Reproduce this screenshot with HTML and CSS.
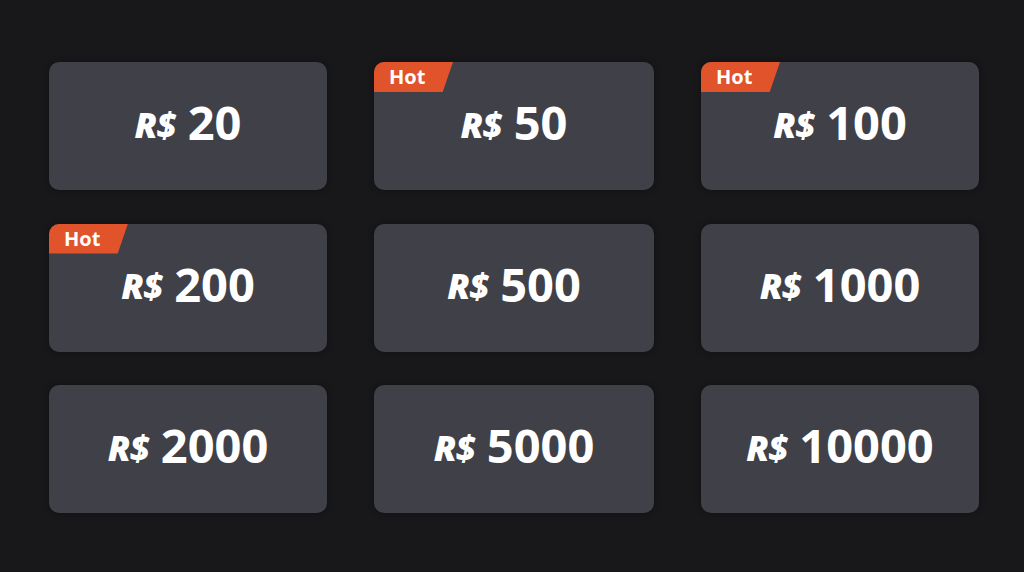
FILE: index.html
```html
<!DOCTYPE html>
<html lang="en">
<head>
    <meta charset="UTF-8">
    <title>Recarga</title>
    <link rel="stylesheet" href="styles.css">
</head>
<body>
    <div class="grid">
        <div class="card"><span class="cur">R$</span><span class="num">20</span></div>
        <div class="card"><span class="hot">Hot</span><span class="cur">R$</span><span class="num">50</span></div>
        <div class="card"><span class="hot">Hot</span><span class="cur">R$</span><span class="num">100</span></div>
        <div class="card"><span class="hot">Hot</span><span class="cur">R$</span><span class="num">200</span></div>
        <div class="card"><span class="cur">R$</span><span class="num">500</span></div>
        <div class="card"><span class="cur">R$</span><span class="num">1000</span></div>
        <div class="card"><span class="cur">R$</span><span class="num">2000</span></div>
        <div class="card"><span class="cur">R$</span><span class="num">5000</span></div>
        <div class="card"><span class="cur">R$</span><span class="num">10000</span></div>
    </div>
</body>
</html>
```

FILE: styles.css
```css
html, body {
  margin: 0;
  padding: 0;
}
body {
  background: #18181a;
  width: 1024px;
  height: 572px;
  font-family: "Open Sans", "Noto Sans", sans-serif;
}
.grid {
  display: grid;
  grid-template-columns: 278px 280px 278px;
  grid-template-rows: 128px 128px 128px;
  column-gap: 47px;
  row-gap: 33.5px;
  padding: 62px 0 0 49px;
}
.card {
  position: relative;
  background: #3f4048;
  border-radius: 10px;
  display: flex;
  align-items: center;
  justify-content: center;
  gap: 12px;
  padding-bottom: 7px;
  box-sizing: border-box;
  color: #fff;
  box-shadow: 0 0 6px rgba(0, 0, 0, 0.35);
}
.cur {
  font-weight: 800;
  font-style: italic;
  font-size: 35px;
  letter-spacing: -1px;
  margin-top: 3px;
}
.num {
  font-weight: 700;
  font-size: 47px;
  line-height: 1;
}
.hot {
  position: absolute;
  left: 0;
  top: 0;
  width: 79px;
  height: 30px;
  box-sizing: border-box;
  padding-left: 15px;
  background: #e0532b;
  border-top-left-radius: 10px;
  clip-path: polygon(0 0, 100% 0, 87% 100%, 0 100%);
  font-size: 20px;
  font-weight: 700;
  line-height: 29px;
  color: #fff;
}
```
